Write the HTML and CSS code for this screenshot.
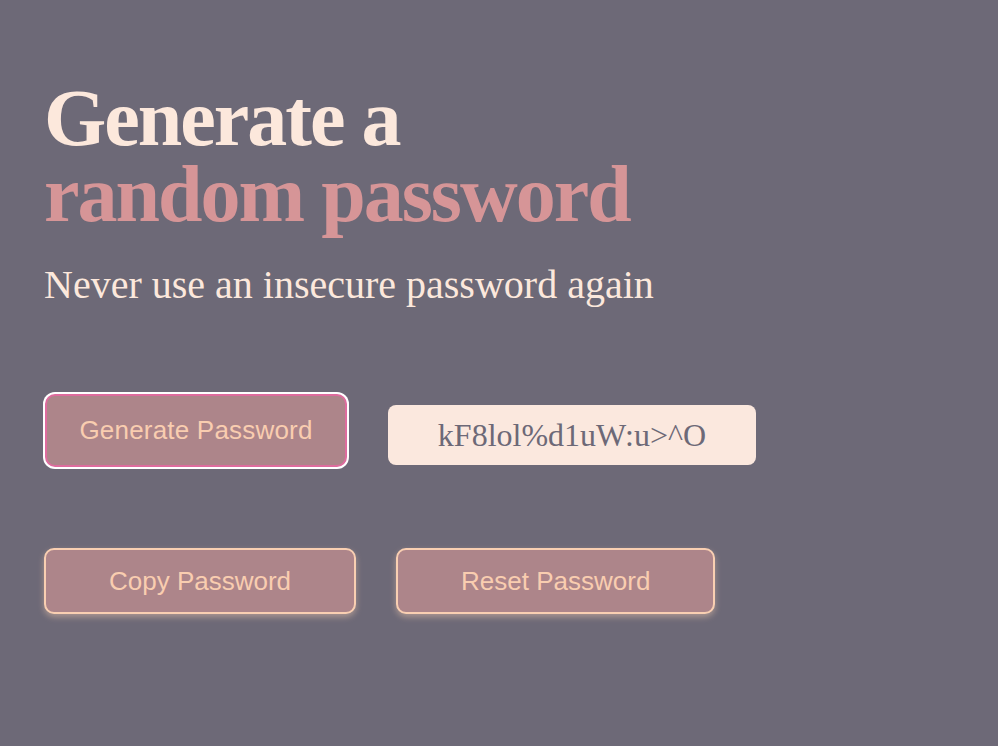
FILE: index.html
```html
<!DOCTYPE html>
<html lang="en">
<head>
<meta charset="utf-8">
<title>Password Generator</title>
<link rel="stylesheet" href="styles.css">
</head>
<body>
<main class="page">
  <h1 class="title"><span class="line">Generate a</span><span class="line accent">random password</span></h1>
  <p class="subtitle">Never use an insecure password again</p>
  <div class="row row-top">
    <button class="btn btn-generate" type="button">Generate Password</button>
    <div class="output">kF8lol%d1uW:u&gt;^O</div>
  </div>
  <div class="row row-bottom">
    <button class="btn btn-action" type="button">Copy Password</button>
    <button class="btn btn-action" type="button">Reset Password</button>
  </div>
</main>
</body>
</html>
```

FILE: styles.css
```css
html, body {
  margin: 0;
  padding: 0;
  background: #6d6977;
}

body {
  min-height: 746px;
}

.page {
  padding: 80px 44px 0;
}

.title {
  margin: 0;
  font-family: "Liberation Serif", "Times New Roman", serif;
  font-weight: 700;
  font-size: 80px;
  line-height: 76px;
  letter-spacing: -2px;
  color: #fce8dc;
}

.line {
  display: block;
}

.accent {
  color: #d69597;
}

.subtitle {
  margin: 30px 0 0;
  font-family: "Liberation Serif", "Times New Roman", serif;
  font-size: 40px;
  line-height: 46px;
  color: #fce8dc;
}

.row {
  display: flex;
  align-items: flex-start;
}

.row-top {
  margin-top: 86px;
  gap: 41px;
  padding-left: 1px;
}

.row-bottom {
  margin-top: 81px;
  gap: 40px;
}

.btn {
  box-sizing: border-box;
  font-family: "Liberation Sans", Arial, sans-serif;
  font-size: 26px;
  color: #f9cdb0;
  background: #ad858a;
  border-radius: 10px;
  cursor: pointer;
  display: flex;
  align-items: center;
  justify-content: center;
}

.btn-generate {
  width: 302px;
  height: 73px;
  padding: 0;
  border: 2px solid #de6c9e;
  box-shadow: 0 0 0 2px #ffffff;
  letter-spacing: 0.2px;
}

.btn-action {
  height: 66px;
  padding: 0 63px;
  border: 2px solid #f9cfb2;
  box-shadow: 0 3px 6px rgba(249, 207, 178, 0.45);
}

.output {
  box-sizing: border-box;
  margin-top: 11px;
  width: 368px;
  height: 60px;
  background: #fbe8de;
  border-radius: 8px;
  display: flex;
  align-items: center;
  justify-content: center;
  font-family: "Liberation Serif", "Times New Roman", serif;
  font-size: 32px;
  color: #6d6977;
}
```
